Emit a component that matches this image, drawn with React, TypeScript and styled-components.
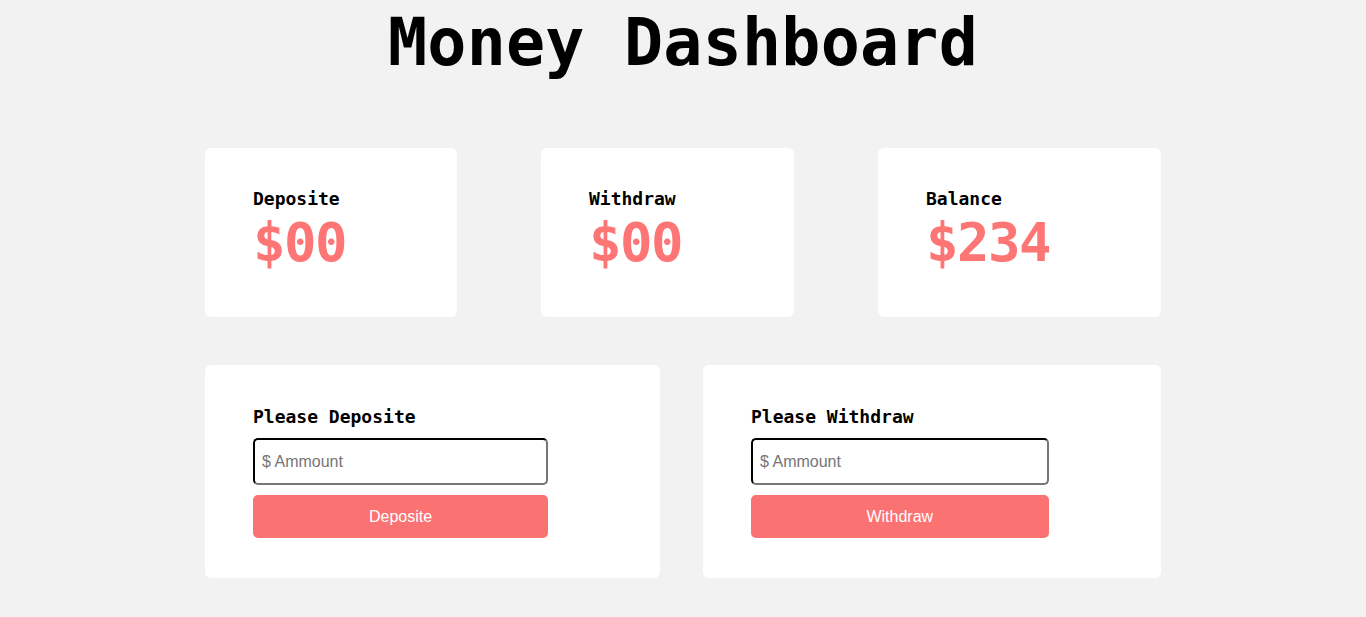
import React from "react";
import styled, { createGlobalStyle } from "styled-components";

const GlobalStyle = createGlobalStyle`
  html, body {
    margin: 0;
    padding: 0;
    background: #f2f2f2;
  }
  * { box-sizing: border-box; }
`;

const mono = `"DejaVu Sans Mono", "Liberation Mono", monospace`;
const coral = "#fb7272";

const Page = styled.div`
  width: 956px;
  margin: 0 auto;
  display: flex;
  flex-direction: column;
`;

const Title = styled.h1`
  margin: 0 0 67px;
  padding-top: 5px;
  font-family: ${mono};
  font-size: 65px;
  font-weight: 700;
  line-height: 76px;
  text-align: center;
  color: #000;
  letter-spacing: 0.2px;
`;

const StatsRow = styled.div`
  display: grid;
  grid-template-columns: 252px 253px 283px;
  justify-content: space-between;
  margin-bottom: 48px;
`;

const Card = styled.div<{ $height: number }>`
  background: #fff;
  border-radius: 6px;
  height: ${(p) => p.$height}px;
  padding: 40px 48px;
  display: flex;
  flex-direction: column;
`;

const StatLabel = styled.div`
  font-family: ${mono};
  font-size: 18px;
  font-weight: 700;
  line-height: 21px;
  color: #000;
`;

const StatValue = styled.div`
  margin-top: 4px;
  font-family: ${mono};
  font-size: 54px;
  font-weight: 700;
  line-height: 60px;
  letter-spacing: -1.5px;
  color: #fd7575;
`;

const ActionRow = styled.div`
  display: grid;
  grid-template-columns: 455px 458px;
  justify-content: space-between;
`;

const ActionTitle = styled.div`
  font-family: ${mono};
  font-size: 18px;
  font-weight: 700;
  line-height: 21px;
  color: #000;
  margin-bottom: 11px;
`;

const AmountInput = styled.input`
  width: 82.2%;
  height: 47px;
  border: 2px inset #767676;
  border-color: #1c1c1c #767676 #767676 #1c1c1c;
  border-radius: 5px;
  padding: 0 7px;
  font-family: "Liberation Sans", Arial, sans-serif;
  font-size: 16px;
  color: #000;
  background: #fff;
  outline: none;
  &::placeholder {
    color: #757575;
  }
`;

const ActionButton = styled.button`
  margin-top: 10px;
  width: 82.2%;
  height: 43px;
  border: none;
  border-radius: 5px;
  background: ${coral};
  color: #fff;
  font-family: "Liberation Sans", Arial, sans-serif;
  font-size: 16px;
  cursor: pointer;
`;

const ActionCard = styled(Card)`
  padding: 41px 48px 40px;
`;

const stats = [
  { label: "Deposite", value: "$00" },
  { label: "Withdraw", value: "$00" },
  { label: "Balance", value: "$234" },
];

const actions = [
  { title: "Please Deposite", button: "Deposite" },
  { title: "Please Withdraw", button: "Withdraw" },
];

export default function App() {
  return (
    <>
      <GlobalStyle />
      <Page>
        <Title>Money Dashboard</Title>
        <StatsRow>
          {stats.map((s) => (
            <Card key={s.label} $height={169}>
              <StatLabel>{s.label}</StatLabel>
              <StatValue>{s.value}</StatValue>
            </Card>
          ))}
        </StatsRow>
        <ActionRow>
          {actions.map((a) => (
            <ActionCard key={a.title} $height={213}>
              <ActionTitle>{a.title}</ActionTitle>
              <AmountInput type="number" placeholder="$ Ammount" />
              <ActionButton>{a.button}</ActionButton>
            </ActionCard>
          ))}
        </ActionRow>
      </Page>
    </>
  );
}
